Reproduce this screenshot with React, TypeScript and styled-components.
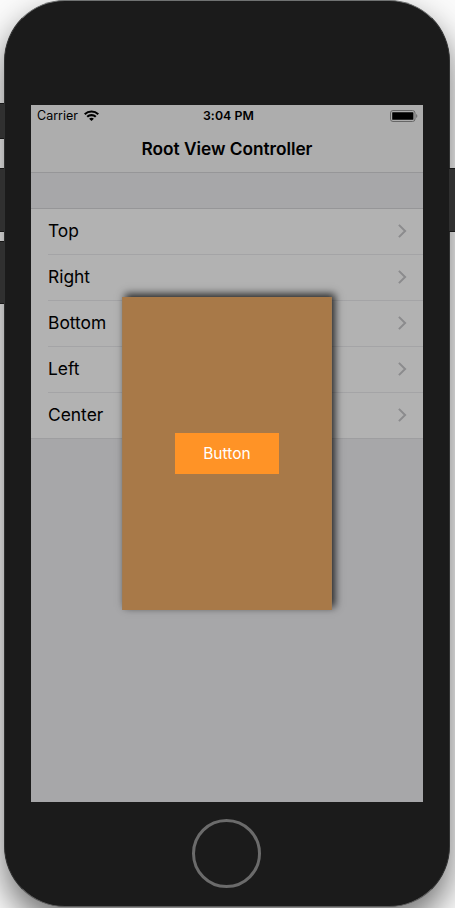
import React from "react";
import styled, { createGlobalStyle } from "styled-components";

const GlobalStyle = createGlobalStyle`
  *, *::before, *::after { box-sizing: border-box; }
  html, body { margin: 0; padding: 0; background: #fff; overflow: hidden; }
  body { font-family: Inter, "Liberation Sans", sans-serif; color: #000; }
`;

const Stage = styled.div`
  position: relative;
  width: 455px;
  height: 908px;
  padding: 0 5px 0 4px;
  overflow: hidden;
  background: #fbfbfb;
`;

const Device = styled.div`
  display: flex;
  flex-direction: column;
  align-items: center;
  width: 446px;
  height: 907px;
  padding-top: 104px;
  border: 1px solid #303131;
  border-top-color: #707272;
  border-bottom-color: #5c5c5c;
  border-radius: 61px;
  background: #1b1b1b;
  box-shadow: 0 16px 34px rgba(0, 0, 0, 0.56);
`;

const SideKey = styled.div<{ $side: "left" | "right"; $top: number; $height: number }>`
  position: absolute;
  ${(p) => p.$side}: 0;
  top: ${(p) => p.$top}px;
  width: ${(p) => (p.$side === "left" ? 4 : 6)}px;
  height: ${(p) => p.$height}px;
  border: solid #171717;
  border-width: 1px 0;
  background: #303030;
`;

const Screen = styled.main`
  position: relative;
  width: 392px;
  height: 697px;
  background: #a7a7a9;
`;

const Header = styled.header`
  height: 68px;
  border-bottom: 1px solid #969698;
  background: #adadad;
`;

const StatusBar = styled.div`
  display: grid;
  grid-template-columns: 1fr auto 1fr;
  align-items: center;
  height: 21px;
  padding: 0 5px 0 6px;
  font-size: 12.5px;
  line-height: 21px;
`;

const Network = styled.div`
  display: flex;
  align-items: center;
  gap: 6px;
  letter-spacing: 0;
`;

const Time = styled.div`
  font-weight: 600;
  font-size: 12.3px;
  letter-spacing: 0.1px;
  transform: translateX(1px);
`;

const Power = styled.div`
  display: flex;
  justify-content: flex-end;
`;

const Title = styled.h1`
  margin: 0;
  height: 46px;
  font-size: 17.3px;
  font-weight: 600;
  line-height: 46px;
  letter-spacing: -0.03px;
  text-align: center;
`;

const List = styled.ul`
  margin: 35px 0 0;
  padding: 0 0 0 17px;
  list-style: none;
  border-top: 1px solid #969698;
  border-bottom: 1px solid #9e9ea0;
  background: #b2b2b2;
`;

const Row = styled.li`
  display: flex;
  align-items: center;
  justify-content: space-between;
  height: 46px;
  padding: 0 16px 1px 0;
  border-bottom: 1px solid #a4a4a6;
  font-size: 17.4px;
  line-height: 22px;

  &:last-child { height: 45px; border-bottom: 0; }
`;

const Modal = styled.div`
  position: absolute;
  top: 192px;
  left: 91px;
  display: grid;
  place-items: center;
  width: 210px;
  height: 313px;
  border: solid #a07b52;
  border-width: 0 1px;
  background: #a87948;
  box-shadow: 3px -3px 8px rgba(0, 0, 0, 0.8);
`;

const ModalButton = styled.button`
  width: 104px;
  height: 41px;
  padding: 0;
  border: 0;
  background: #ff9326;
  color: #fff;
  font: 400 15.5px/41px Inter, sans-serif;
  letter-spacing: 0.05px;
`;

const HomeButton = styled.div`
  width: 69px;
  height: 69px;
  margin: 17px 1px 0 0;
  border: 3px solid #6b6b6b;
  border-radius: 50%;
`;

const WifiIcon = () => (
  <svg width="15" height="12" viewBox="0 0 15 12" fill="none" stroke="#000" strokeWidth="2.1">
    <path d="M0.7 4.2C4.5 0.5 10.5 0.5 14.3 4.2" />
    <path d="M3.2 6.8C5.6 4.5 9.4 4.5 11.8 6.8" />
    <path d="M5.1 8.7C6.5 7.4 8.5 7.4 9.9 8.7L7.5 11.1Z" fill="#000" stroke="none" />
  </svg>
);

const BatteryIcon = () => (
  <svg width="28" height="12" viewBox="0 0 28 12">
    <rect x="0.5" y="0.5" width="24.5" height="11" rx="2.5" fill="none" stroke="#666" />
    <rect x="2.2" y="2.2" width="21.2" height="7.6" rx="0.5" fill="#000" />
    <path d="M26.4 4v4c1.1-.5 1.1-3.500 0-4Z" fill="#555" />
  </svg>
);

const Chevron = () => (
  <svg width="9" height="14" viewBox="0 0 9 14" fill="none" stroke="#8b8b8d" strokeWidth="2">
    <path d="M0.900 0.900L7.100 7L0.900 13.100" />
  </svg>
);

const rows = ["Top", "Right", "Bottom", "Left", "Center"];

export default function App() {
  return (
    <>
      <GlobalStyle />
      <Stage>
        <Device>
          <Screen>
            <Header>
              <StatusBar>
                <Network>Carrier <WifiIcon /></Network>
                <Time>3:04 PM</Time>
                <Power><BatteryIcon /></Power>
              </StatusBar>
              <Title>Root View Controller</Title>
            </Header>
            <List>
              {rows.map((row) => (
                <Row key={row}>
                  <span>{row}</span>
                  <Chevron />
                </Row>
              ))}
            </List>
            <Modal>
              <ModalButton type="button">Button</ModalButton>
            </Modal>
          </Screen>
          <HomeButton />
        </Device>
        <SideKey $side="left" $top={103} $height={36} />
        <SideKey $side="left" $top={168} $height={64} />
        <SideKey $side="left" $top={241} $height={63} />
        <SideKey $side="right" $top={168} $height={64} />
      </Stage>
    </>
  );
}
